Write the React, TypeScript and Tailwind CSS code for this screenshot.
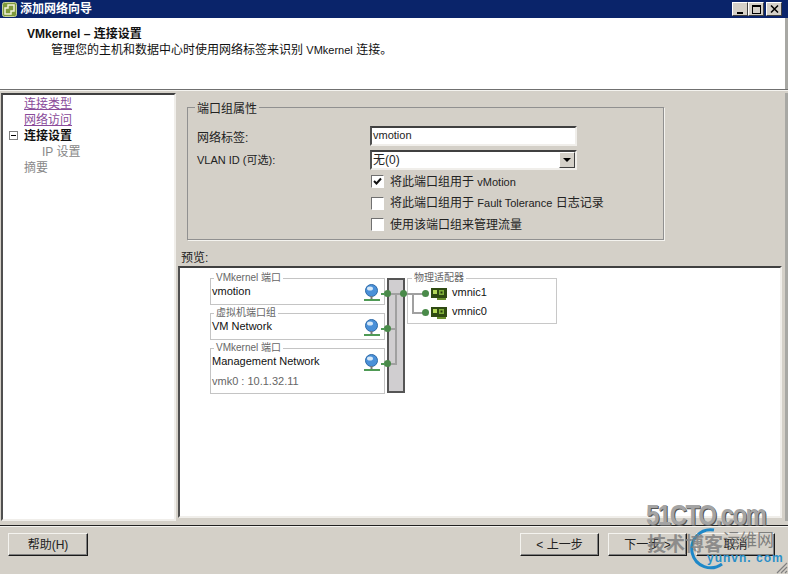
const font = { fontFamily: '"Liberation Sans", "Noto Sans CJK SC", sans-serif' }

function Sunken({ className, children }: { className: string; children?: React.ReactNode }) {
  return (
    <div className={`border-2 border-t-[#404040] border-l-[#505050] border-r-[#f0eeea] border-b-[#f0eeea] bg-white ${className}`}>
      {children}
    </div>
  )
}

function WinButton({ label, className }: { label: string; className: string }) {
  return (
    <div className={`flex h-[23px] items-center justify-center border border-t-[#f4f3ef] border-l-[#f4f3ef] border-r-[#1a1a1a] border-b-[#1a1a1a] bg-[#d4d0c8] text-[12px] text-[#222] shadow-[inset_-1px_-1px_0_#808080] ${className}`}>
      {label}
    </div>
  )
}

function CaptionButton({ children }: { children: React.ReactNode }) {
  return (
    <div className="flex h-[14px] w-[16px] items-center justify-center border border-t-white border-l-white border-r-[#404040] border-b-[#404040] bg-[#d4d0c8]">
      {children}
    </div>
  )
}

function Check({ checked, children }: { checked?: boolean; children: React.ReactNode }) {
  return (
    <div className="flex h-[21.5px] items-center gap-[6px] whitespace-nowrap pl-[1px] text-[12px] text-[#222]">
      <div className="flex h-[13px] w-[13px] shrink-0 items-center justify-center border border-t-[#707070] border-l-[#707070] border-r-white border-b-white bg-white">
        {checked && (
          <svg width="9" height="9" viewBox="0 0 9 9">
            <path d="M1 4 L3.5 6.5 L8 1.5" fill="none" stroke="#111" strokeWidth="2" />
          </svg>
        )}
      </div>
      <span>{children}</span>
    </div>
  )
}

function Globe() {
  return (
    <svg width="18" height="19" viewBox="0 0 18 19">
      <circle cx="8.5" cy="6.5" r="6" fill="#4a90d8" stroke="#2e6aa8" />
      <ellipse cx="7" cy="4.5" rx="3" ry="2" fill="#d6e8f8" />
      <rect x="7.5" y="12" width="2" height="3" fill="#777" />
      <rect x="1" y="15" width="16" height="2" fill="#4f9a55" />
    </svg>
  )
}

function Nic() {
  return (
    <svg width="17" height="13" viewBox="0 0 17 13">
      <rect x="0" y="1" width="16" height="10" fill="#2f4a12" />
      <rect x="2" y="3" width="4" height="4" fill="#b5d85a" />
      <rect x="8" y="3" width="5" height="5" fill="#7fb03a" />
      <rect x="9.5" y="4.5" width="2" height="2" fill="#24380e" />
      <rect x="6" y="11" width="9" height="2" fill="#6a8f2e" />
    </svg>
  )
}

function PortBox({ title, name, sub, className }: { title: string; name: string; sub?: string; className: string }) {
  return (
    <div className={`absolute border border-[#c4c4c4] bg-white ${className}`}>
      <span className="absolute left-[3px] top-[-7px] bg-white px-[2px] text-[10px] leading-[12px] text-[#666]">{title}</span>
      <div className="pl-[1px] pt-[5px] text-[11px] leading-[14px] text-[#111]">{name}</div>
      {sub && <div className="pl-[1px] pt-[6px] text-[11px] leading-[14px] text-[#666]">{sub}</div>}
      <div className="absolute right-[3px] top-[5px]">
        <Globe />
      </div>
    </div>
  )
}

function Dot({ className }: { className: string }) {
  return <div className={`absolute h-[7px] w-[7px] rounded-full bg-[#4a8a4a] ${className}`} />
}

function Line({ className }: { className: string }) {
  return <div className={`absolute bg-[#a0a0a0] ${className}`} />
}

function Diagram() {
  return (
    <div className="relative h-full w-full overflow-hidden">
      <PortBox title="VMkernel 端口" name="vmotion" className="left-[30px] top-[10px] h-[27px] w-[175px]" />
      <PortBox title="虚拟机端口组" name="VM Network" className="left-[30px] top-[45px] h-[27px] w-[175px]" />
      <PortBox title="VMkernel 端口" name="Management Network" sub="vmk0 : 10.1.32.11" className="left-[30px] top-[80px] h-[46px] w-[175px]" />

      <div className="absolute left-[207px] top-[10px] h-[115px] w-[18px] border-2 border-[#555] bg-[#d0ced0]" />
      <Line className="left-[208px] top-[25px] h-[2px] w-[22px]" />
      <Line className="left-[215px] top-[25px] h-[71px] w-[2px]" />
      <Line className="left-[208px] top-[60px] h-[2px] w-[9px]" />
      <Line className="left-[208px] top-[95px] h-[2px] w-[9px]" />
      <Dot className="left-[204px] top-[22px]" />
      <Dot className="left-[204px] top-[57px]" />
      <Dot className="left-[204px] top-[92px]" />
      <Dot className="left-[220px] top-[22px]" />
      <Line className="left-[201px] top-[25px] h-[2px] w-[4px] !bg-[#4f9a55]" />
      <Line className="left-[201px] top-[60px] h-[2px] w-[4px] !bg-[#4f9a55]" />
      <Line className="left-[201px] top-[95px] h-[2px] w-[4px] !bg-[#4f9a55]" />

      <div className="absolute left-[227px] top-[10px] h-[46px] w-[150px] border border-[#c8c8c8] bg-white">
        <span className="absolute left-[4px] top-[-7px] bg-white px-[2px] text-[10px] leading-[12px] text-[#666]">物理适配器</span>
      </div>
      <Line className="left-[227px] top-[25px] h-[2px] w-[16px]" />
      <Line className="left-[232px] top-[25px] h-[20px] w-[2px]" />
      <Line className="left-[232px] top-[44px] h-[2px] w-[11px]" />
      <Dot className="left-[242px] top-[22px]" />
      <Dot className="left-[242px] top-[41px]" />
      <div className="absolute left-[251px] top-[19px]"><Nic /></div>
      <div className="absolute left-[251px] top-[38px]"><Nic /></div>
      <span className="absolute left-[272px] top-[17px] text-[11px] leading-[14px] text-[#111]">vmnic1</span>
      <span className="absolute left-[272px] top-[36px] text-[11px] leading-[14px] text-[#111]">vmnic0</span>
    </div>
  )
}

export default function App() {
  return (
    <div style={font} className="relative flex h-[574px] w-[788px] flex-col overflow-hidden bg-[#d4d0c8]">
      <div className="flex h-[18px] shrink-0 items-center bg-[#0a246a] pl-[2px] pr-[6px]">
        <svg width="15" height="15" viewBox="0 0 15 15">
          <rect x="0.5" y="0.5" width="14" height="14" rx="2" fill="#7f9a3c" stroke="#c8d49a" />
          <path d="M6 3 H12 V9 H9 V12 H3 V6 H6 Z" fill="none" stroke="#f0f0d8" strokeWidth="1.5" />
        </svg>
        <span className="ml-[3px] text-[12px] font-bold text-white">添加网络向导</span>
        <div className="ml-auto flex">
          <CaptionButton>
            <div className="mt-[7px] h-[2px] w-[6px] bg-black" />
          </CaptionButton>
          <CaptionButton>
            <div className="h-[9px] w-[9px] border border-t-2 border-black" />
          </CaptionButton>
          <div className="w-[2px]" />
          <CaptionButton>
            <svg width="9" height="8" viewBox="0 0 9 8">
              <path d="M1 0.5 L8 7.5 M8 0.5 L1 7.5" stroke="#000" strokeWidth="1.5" />
            </svg>
          </CaptionButton>
        </div>
      </div>

      <div className="flex h-[71px] shrink-0 flex-col border-r-[3px] border-[#a8a8a4] bg-white pl-[27px] pt-[9px] text-[#111]">
        <div className="text-[12px] font-bold leading-[15px]">VMkernel – 连接设置</div>
        <div className="pl-[24px] text-[12px] leading-[17px]">
          管理您的主机和数据中心时使用网络标签来识别 <span className="text-[11px]">VMkernel</span> 连接。
        </div>
      </div>
      <div className="h-[2px] shrink-0 border-t border-[#707070] bg-[#f4f3ef]" />

      <div className="flex min-h-0 flex-1 pt-[2px]">
        <Sunken className="ml-[1px] h-[428px] w-[175px] shrink-0 pt-[1px]">
          <div className="pl-[21px] text-[12px] leading-[16px]">
            <div className="text-[#8a4b9a] underline">连接类型</div>
            <div className="text-[#8a4b9a] underline">网络访问</div>
            <div className="relative font-bold text-[#111]">
              <div className="absolute left-[-15px] top-[3px] flex h-[9px] w-[9px] items-center justify-center border border-[#808080]">
                <div className="h-[1px] w-[5px] bg-black" />
              </div>
              连接设置
            </div>
            <div className="pl-[18px] text-[#888]">IP 设置</div>
            <div className="text-[#888]">摘要</div>
          </div>
        </Sunken>

        <div className="ml-[2px] flex min-w-0 flex-1 flex-col">
          <div className="relative ml-[9px] mt-[14px] h-[133px] w-[477px] shrink-0 border border-[#909090] shadow-[1px_1px_0_#f4f3ef]">
            <span className="absolute left-[7px] top-[-7px] bg-[#d4d0c8] px-[2px] text-[12px] leading-[16px] text-[#222]">端口组属性</span>
            <div className="grid grid-cols-[173px_207px] pl-[9px] pt-[18px] text-[12px] text-[#222]">
              <div className="flex h-[24px] items-center">网络标签:</div>
              <Sunken className="h-[20px] pl-[1px] text-[11px] leading-[15px]">vmotion</Sunken>
              <div className="flex h-[21px] items-center text-[11px]">VLAN ID (可选):</div>
              <Sunken className="flex h-[20px] items-center pl-[1px] text-[12px]">
                <span>无(0)</span>
                <div className="ml-auto flex h-[16px] w-[16px] items-center justify-center border border-t-white border-l-white border-r-[#404040] border-b-[#404040] bg-[#d4d0c8]">
                  <div className="h-0 w-0 border-x-[4px] border-t-[4px] border-x-transparent border-t-black" />
                </div>
              </Sunken>
              <div />
              <div>
                <Check checked>将此端口组用于 <span className="text-[11px]">vMotion</span></Check>
                <Check>将此端口组用于 <span className="text-[11px]">Fault Tolerance</span> 日志记录</Check>
                <Check>使用该端口组来管理流量</Check>
              </div>
            </div>
          </div>
          <div className="pl-[3px] pt-[10px] text-[12px] leading-[16px] text-[#222]">预览:</div>
          <Sunken className="h-[252px] w-[604px] shrink-0">
            <Diagram />
          </Sunken>
        </div>
        <div className="w-[3px] shrink-0 bg-[#a8a8a4]" />
      </div>

      <div className="mt-[4px] h-[2px] shrink-0 border-t border-[#222] bg-[#f4f3ef]" />
      <div className="flex h-[47px] shrink-0 items-start pt-[6px]">
        <WinButton label="帮助(H)" className="ml-[8px] w-[80px]" />
        <WinButton label="< 上一步" className="ml-[432px] w-[79px]" />
        <WinButton label="下一步 >" className="ml-[9px] w-[79px]" />
        <WinButton label="取消" className="ml-[9px] w-[79px]" />
      </div>

      <svg className="pointer-events-none absolute right-0 bottom-0" width="14" height="14" viewBox="0 0 14 14">
        <path d="M13 3 L3 13 M13 7 L7 13 M13 11 L11 13" stroke="#808080" strokeWidth="1.2" />
      </svg>

      <div className="pointer-events-none absolute left-[646px] top-[500px] origin-top scale-y-[1.25] whitespace-nowrap text-[24px] font-bold leading-[24px] tracking-[-1.5px] text-[#a4a4a4] [text-shadow:1px_1px_0_#555]">51CTO.com</div>
      <svg className="pointer-events-none absolute left-[684px] top-[526px]" width="44" height="44" viewBox="0 0 44 44">
        <path d="M30 4 A19 19 0 1 0 38 38" fill="none" stroke="#1e88c8" strokeWidth="3" />
      </svg>
      <div className="pointer-events-none absolute left-[647px] top-[534px] whitespace-nowrap text-[19px] font-bold leading-[22px] text-[#808080]/85">技术博客</div>
      <div className="pointer-events-none absolute left-[723px] top-[531px] whitespace-nowrap text-[17px] leading-[20px] text-[#707070]/85">运维网</div>
      <div className="pointer-events-none absolute left-[707px] top-[551px] whitespace-nowrap text-[12px] font-bold leading-[14px] tracking-[1px] text-[#2a8fc8]">yunvn. com</div>
    </div>
  )
}
